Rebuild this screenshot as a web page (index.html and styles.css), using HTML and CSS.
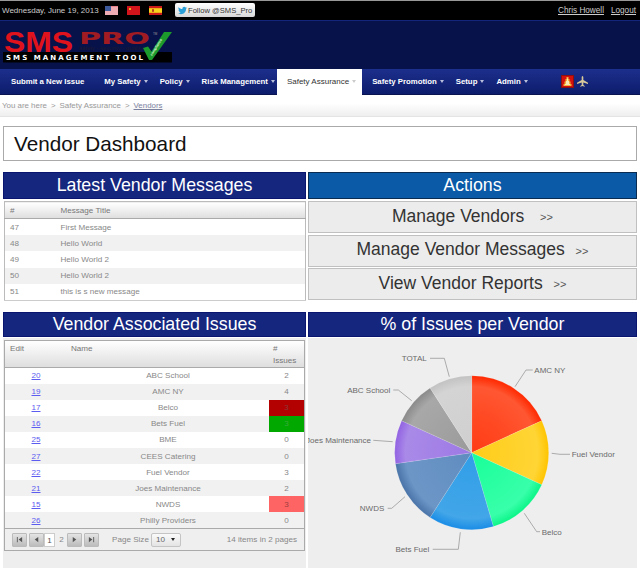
FILE: index.html
```html
<!DOCTYPE html>
<html lang="en">
<head>
  <meta charset="UTF-8">
  <title>Vendor Dashboard</title>
  <link rel="stylesheet" href="styles.css">
</head>
<body>
  <div class="topBar">
    <span class="topDate">Wednesday, June 19, 2013</span>
    <div class="flags">
      <svg class="flag" viewBox="0 0 13 9">
        <rect width="13" height="9" fill="#e8838c"/>
        <path d="M0 2h13M0 4h13M0 6h13M0 8h13" stroke="#f6d5d8" stroke-width="1"/>
        <rect width="6" height="5" fill="#3d5a9c"/>
      </svg>
      <svg class="flag" viewBox="0 0 13 9">
        <rect width="13" height="9" fill="#d3141a"/>
        <rect x="2" y="2" width="2" height="2" fill="#e8b020"/>
      </svg>
      <svg class="flag" viewBox="0 0 13 9">
        <rect width="13" height="9" fill="#cc1a1a"/>
        <rect y="2.2" width="13" height="4.6" fill="#f7d21c"/>
        <rect x="3" y="3.2" width="2" height="2.6" fill="#b8401a"/>
      </svg>
    </div>
    <div class="followBtn">
      <svg class="bird" viewBox="0 0 24 24"><path fill="#2a9fd8" d="M23.953 4.57a10 10 0 01-2.825.775 4.958 4.958 0 002.163-2.723c-.951.555-2.005.959-3.127 1.184a4.92 4.92 0 00-8.384 4.482C7.69 8.095 4.067 6.13 1.64 3.162a4.822 4.822 0 00-.666 2.475c0 1.71.87 3.213 2.188 4.096a4.904 4.904 0 01-2.228-.616v.06a4.923 4.923 0 003.946 4.827 4.996 4.996 0 01-2.212.085 4.936 4.936 0 004.604 3.417 9.867 9.867 0 01-6.102 2.105c-.39 0-.779-.023-1.17-.067a13.995 13.995 0 007.557 2.209c9.053 0 13.998-7.496 13.998-13.985 0-.21 0-.42-.015-.63A9.935 9.935 0 0024 4.59z"/></svg>
      <span>Follow @SMS_Pro</span>
    </div>
    <div class="userLinks">
      <a href="#">Chris Howell</a>
      <a href="#">Logout</a>
    </div>
  </div>

  <div class="logoBar">
    <svg class="logo" viewBox="0 20 180 49">
      <text class="logoSms" x="4" y="51.500" textLength="69" lengthAdjust="spacingAndGlyphs">SMS</text>
      <text class="logoPro" x="79" y="43.500" textLength="71" lengthAdjust="spacingAndGlyphs">PRO</text>
      <text class="logoTm" x="153" y="35">TM</text>
      <text class="logoTag" x="79" y="50" textLength="64" lengthAdjust="spacingAndGlyphs">safety - security - quality</text>
      <rect x="3" y="52" width="169" height="10.500" fill="#000"/>
      <text class="logoBarText" x="6" y="60" textLength="137" lengthAdjust="spacing">SMS MANAGEMENT TOOL</text>
      <path d="M143 48l5-1.500 3.500 5L164 32h8L152 60h-3z" fill="#1c9a2c"/>
      <text class="logoCheck" transform="translate(152 56) rotate(-58)">compliance</text>
    </svg>
  </div>

  <nav class="mainNav">
    <a class="navItem navFirst" href="#">Submit a New Issue</a>
    <a class="navItem" href="#">My Safety<i class="caret"></i></a>
    <a class="navItem" href="#">Policy<i class="caret"></i></a>
    <a class="navItem" href="#">Risk Management<i class="caret"></i></a>
    <a class="navItem navActive" href="#">Safety Assurance<i class="caret"></i></a>
    <a class="navItem" href="#">Safety Promotion<i class="caret"></i></a>
    <a class="navItem" href="#">Setup<i class="caret"></i></a>
    <a class="navItem" href="#">Admin<i class="caret"></i></a>
    <div class="navIcons">
      <svg class="bell" viewBox="0 0 13 13">
        <rect width="13" height="13" fill="#8c1010"/>
        <rect x="1" y="1" width="11" height="11" fill="#d4100c"/>
        <path d="M5.500 2h2v2h1v2.500h1V9h1v2h-8V9h1V6.500h1V4h1z" fill="#f5b23a"/>
        <path d="M6 3.500h1v2.500h1v3h1v1H4V9h1V6h1z" fill="#fbe7b4"/>
      </svg>
      <svg class="plane" viewBox="0 0 12 12">
        <path d="M6 0c.6 0 .9.8.9 1.600V4.400L12 7.400V8.600L6.900 7V9.700L8.400 10.800V11.700L6 11 3.600 11.700V10.800L5.100 9.700V7L0 8.600V7.400L5.100 4.400V1.600C5.100.8 5.400 0 6 0z" fill="#d8c99a"/>
      </svg>
    </div>
  </nav>

  <div class="breadcrumb">
    <span>You are here</span><span class="crumbSep">&gt;</span><span>Safety Assurance</span><span class="crumbSep">&gt;</span><a href="#">Vendors</a>
  </div>

  <h1 class="pageTitle">Vendor Dashboard</h1>

  <div class="dashboard">
    <section class="panel">
      <h2 class="panelHead">Latest Vendor Messages</h2>
      <table class="grid msgGrid">
        <thead>
          <tr><th class="msgId">#</th><th>Message Title</th></tr>
        </thead>
        <tbody>
          <tr><td class="msgId">47</td><td>First Message</td></tr>
          <tr><td class="msgId">48</td><td>Hello World</td></tr>
          <tr><td class="msgId">49</td><td>Hello World 2</td></tr>
          <tr><td class="msgId">50</td><td>Hello World 2</td></tr>
          <tr><td class="msgId">51</td><td>this is s new message</td></tr>
        </tbody>
      </table>
    </section>

    <section class="panel">
      <h2 class="panelHead actionsHead">Actions</h2>
      <div class="actionList">
        <a class="actionBtn" href="#">Manage Vendors&nbsp; <small>&gt;&gt;</small></a>
        <a class="actionBtn" href="#">Manage Vendor Messages <small>&gt;&gt;</small></a>
        <a class="actionBtn" href="#">View Vendor Reports <small>&gt;&gt;</small></a>
      </div>
    </section>

    <section class="panel panelGray">
      <h2 class="panelHead">Vendor Associated Issues</h2>
      <div class="issuesWrap">
        <table class="grid issuesGrid">
          <thead>
            <tr><th class="colEdit">Edit</th><th class="colName">Name</th><th class="colCount">#<br>Issues</th></tr>
          </thead>
          <tbody>
            <tr><td class="colEdit"><a href="#">20</a></td><td class="colName">ABC School</td><td class="colCount">2</td></tr>
            <tr><td class="colEdit"><a href="#">19</a></td><td class="colName">AMC NY</td><td class="colCount">4</td></tr>
            <tr><td class="colEdit"><a href="#">17</a></td><td class="colName">Belco</td><td class="colCount hitRed">3</td></tr>
            <tr><td class="colEdit"><a href="#">16</a></td><td class="colName">Bets Fuel</td><td class="colCount hitGreen">3</td></tr>
            <tr><td class="colEdit"><a href="#">25</a></td><td class="colName">BME</td><td class="colCount">0</td></tr>
            <tr><td class="colEdit"><a href="#">27</a></td><td class="colName">CEES Catering</td><td class="colCount">0</td></tr>
            <tr><td class="colEdit"><a href="#">22</a></td><td class="colName">Fuel Vendor</td><td class="colCount">3</td></tr>
            <tr><td class="colEdit"><a href="#">21</a></td><td class="colName">Joes Maintenance</td><td class="colCount">2</td></tr>
            <tr><td class="colEdit"><a href="#">15</a></td><td class="colName">NWDS</td><td class="colCount hitPink">3</td></tr>
            <tr><td class="colEdit"><a href="#">26</a></td><td class="colName">Philly Providers</td><td class="colCount">0</td></tr>
          </tbody>
        </table>
        <div class="pager">
          <span class="pageBtn"><svg viewBox="0 0 8 8"><path d="M1 1h1v6H1zM7 1v6L3 4z"/></svg></span>
          <span class="pageBtn pagePrev"><svg viewBox="0 0 8 8"><path d="M6 1v6L2 4z"/></svg></span>
          <span class="pageNum pageCurrent">1</span>
          <span class="pageNum">2</span>
          <span class="pageBtn"><svg viewBox="0 0 8 8"><path d="M2 1v6l4-3z"/></svg></span>
          <span class="pageBtn pageLast"><svg viewBox="0 0 8 8"><path d="M1 1v6l4-3zM6 1h1v6H6z"/></svg></span>
          <span class="pageSize">Page Size</span>
          <span class="sizeSelect">10<i class="selectCaret"></i></span>
          <span class="pageInfo">14 items in 2 pages</span>
        </div>
      </div>
    </section>

    <section class="panel panelGray">
      <h2 class="panelHead">% of Issues per Vendor</h2>
      <svg class="pie" viewBox="0 0 329 230">
        <defs>
          <radialGradient id="gRed" gradientUnits="userSpaceOnUse" cx="163.700" cy="114.700" r="77">
            <stop offset="0" stop-color="#ff3c14"/><stop offset=".5" stop-color="#ff4a24"/><stop offset=".86" stop-color="#ff5732"/><stop offset="1" stop-color="#ff2800"/>
          </radialGradient>
          <radialGradient id="gYellow" gradientUnits="userSpaceOnUse" cx="163.700" cy="114.700" r="77">
            <stop offset="0" stop-color="#ffcc18"/><stop offset=".86" stop-color="#ffd535"/><stop offset="1" stop-color="#ffc400"/>
          </radialGradient>
          <radialGradient id="gGreen" gradientUnits="userSpaceOnUse" cx="163.700" cy="114.700" r="77">
            <stop offset="0" stop-color="#18ff98"/><stop offset=".86" stop-color="#38ffaa"/><stop offset="1" stop-color="#0cf588"/>
          </radialGradient>
          <radialGradient id="gBlue" gradientUnits="userSpaceOnUse" cx="163.700" cy="114.700" r="77">
            <stop offset="0" stop-color="#309ee8"/><stop offset=".86" stop-color="#42a6e8"/><stop offset="1" stop-color="#1a8ce6"/>
          </radialGradient>
          <radialGradient id="gSteel" gradientUnits="userSpaceOnUse" cx="163.700" cy="114.700" r="77">
            <stop offset="0" stop-color="#5f8cc0"/><stop offset=".86" stop-color="#6c96c6"/><stop offset="1" stop-color="#4a74a8"/>
          </radialGradient>
          <radialGradient id="gPurple" gradientUnits="userSpaceOnUse" cx="163.700" cy="114.700" r="77">
            <stop offset="0" stop-color="#9d78e4"/><stop offset=".86" stop-color="#a98ae8"/><stop offset="1" stop-color="#9262e2"/>
          </radialGradient>
          <radialGradient id="gGray" gradientUnits="userSpaceOnUse" cx="163.700" cy="114.700" r="77">
            <stop offset="0" stop-color="#9a9a9a"/><stop offset=".86" stop-color="#a8a8a8"/><stop offset="1" stop-color="#8a8a8a"/>
          </radialGradient>
          <radialGradient id="gLight" gradientUnits="userSpaceOnUse" cx="163.700" cy="114.700" r="77">
            <stop offset="0" stop-color="#cfcfcf"/><stop offset=".86" stop-color="#d4d4d4"/><stop offset="1" stop-color="#c2c2c2"/>
          </radialGradient>
        </defs>
        <g class="slices">
          <path d="M163.700 114.700V37.700A77 77 0 0 1 233.740 82.710Z" fill="url(#gRed)"/>
          <path d="M163.700 114.700L233.740 82.710A77 77 0 0 1 233.740 146.690Z" fill="url(#gYellow)"/>
          <path d="M163.700 114.700L233.740 146.690A77 77 0 0 1 185.390 188.580Z" fill="url(#gGreen)"/>
          <path d="M163.700 114.700L185.390 188.580A77 77 0 0 1 122.070 179.480Z" fill="url(#gBlue)"/>
          <path d="M163.700 114.700L122.070 179.480A77 77 0 0 1 87.490 125.660Z" fill="url(#gSteel)"/>
          <path d="M163.700 114.700L87.490 125.660A77 77 0 0 1 93.660 82.710Z" fill="url(#gPurple)"/>
          <path d="M163.700 114.700L93.660 82.710A77 77 0 0 1 122.070 49.920Z" fill="url(#gGray)"/>
          <path d="M163.700 114.700L122.070 49.920A77 77 0 0 1 163.700 37.700Z" fill="url(#gLight)"/>
        </g>
        <g class="leaders">
          <path d="M207 48.700L218 32H224.700"/>
          <path d="M243.700 115.300L252 116.300H262"/>
          <path d="M216.300 175.300L228.700 193.700H232"/>
          <path d="M152.300 194.300L150.300 211.300H124.700"/>
          <path d="M97 158.700L83.700 170.300H79.700"/>
          <path d="M84.700 103.700L65.300 102.300"/>
          <path d="M103.700 62.700L90.300 52H85.300"/>
          <path d="M141.300 38.700L136.300 20.300H122"/>
        </g>
        <g class="pieLabels">
          <text x="226.300" y="35">AMC NY</text>
          <text x="263.700" y="119">Fuel Vendor</text>
          <text x="233.700" y="197">Belco</text>
          <text class="labelEnd" x="121.300" y="214">Bets Fuel</text>
          <text class="labelEnd" x="76.300" y="173">NWDS</text>
          <text class="labelEnd" x="63" y="105">Joes Maintenance</text>
          <text class="labelEnd" x="82.300" y="54.500">ABC School</text>
          <text class="labelEnd" x="118.700" y="23">TOTAL</text>
        </g>
      </svg>
    </section>
  </div>
</body>
</html>
```

FILE: styles.css
```css
html, body {
  margin: 0;
  padding: 0;
  height: 572px;
  overflow: hidden;
}
body {
  font-family: "Liberation Sans", Arial, sans-serif;
  background-color: #fff;
  color: #777;
}

/* top strip */
.topBar {
  display: flex;
  align-items: center;
  box-sizing: border-box;
  height: 20px;
  border-top: 1px solid #999;
  background-color: #000;
  color: #ccc;
  font-size: 8px;
  padding: 0 4px 1px 2px;
}
.topDate { width: 103px; white-space: nowrap; }
.flags {
  display: flex;
  gap: 9px;
  width: 70px;
}
.flag { width: 13px; height: 9px; }
.followBtn {
  display: flex;
  align-items: center;
  gap: 1px;
  box-sizing: border-box;
  width: 80px;
  height: 14px;
  background: linear-gradient(#fff, #d8d8d8);
  border-radius: 2px;
  padding-left: 3px;
  color: #333;
  font-size: 7.600px;
  white-space: nowrap;
}
.bird { width: 9px; height: 9px; flex: none; }
.userLinks {
  display: flex;
  gap: 7px;
  margin-left: auto;
}
.userLinks a { color: #ccc; font-size: 8.200px; }

/* logo */
.logoBar {
  height: 49px;
  box-sizing: border-box;
  background-color: #08124a;
  border-top: 1px solid #14247a;
}
.logo {
  display: block;
  width: 180px;
  height: 49px;
  margin-top: -1px;
}
.logoSms {
  font-family: "Liberation Sans", Arial, sans-serif;
  font-size: 29px;
  font-weight: bold;
  fill: #e0121c;
}
.logoPro {
  font-family: "DejaVu Sans", sans-serif;
  font-size: 15px;
  font-weight: bold;
  fill: #a01c22;
}
.logoTm { font-size: 3px; fill: #999; }
.logoTag { font-size: 5px; fill: #1a1a30; }
.logoBarText {
  font-family: "DejaVu Sans", sans-serif;
  font-size: 7px;
  font-weight: bold;
  fill: #fff;
}
.logoCheck { font-size: 3.500px; font-weight: bold; fill: #e8ffe8; }

/* main nav */
.mainNav {
  display: flex;
  align-items: center;
  height: 26px;
  background: linear-gradient(#1c2f8c, #0d1c6c);
  border-bottom: 1px solid #0a1450;
  box-sizing: border-box;
}
.navItem {
  display: flex;
  align-items: center;
  height: 26px;
  padding: 0 6px;
  color: #fff;
  font-size: 7.800px;
  font-weight: bold;
  text-decoration: none;
  white-space: nowrap;
}
.navFirst { padding-left: 11px; padding-right: 14px; }
.navActive {
  background-color: #fff;
  color: #333;
  font-weight: normal;
  padding: 0 6px 0 10px;
  margin: 0 4px 0 -4px;
  font-size: 8px;
}
.caret {
  display: inline-block;
  margin-left: 3px;
  border-left: 2.500px solid transparent;
  border-right: 2.500px solid transparent;
  border-top: 3px solid #b8c0dc;
}
.navActive .caret { border-top-color: #ccc; }
.navIcons {
  display: flex;
  align-items: center;
  gap: 3px;
  margin-left: 27px;
}
.bell { width: 13px; height: 13px; }
.plane { width: 11px; height: 11px; }

/* breadcrumb */
.breadcrumb {
  display: flex;
  align-items: center;
  height: 22px;
  padding: 0 2px;
  background: linear-gradient(#fff 40%, #eee);
  border-bottom: 1px solid #e4e4e4;
  box-sizing: border-box;
  font-size: 7.900px;
  color: #999;
}
.breadcrumb a { color: #7a82a0; }
.crumbSep { margin: 0 4px; }

.pageTitle {
  box-sizing: border-box;
  height: 35px;
  margin: 9px 3px 0;
  padding-left: 10px;
  border: 1px solid #aaa;
  color: #111;
  font-size: 20.700px;
  font-weight: normal;
  line-height: 33px;
}

/* dashboard panels */
.dashboard {
  display: grid;
  grid-template-columns: 303px 329px;
  grid-template-rows: 128px 256px;
  column-gap: 2px;
  row-gap: 12px;
  margin: 11px 0 0 3px;
}
.panel { display: flex; flex-direction: column; min-width: 0; }
.panelGray { background-color: #eee; }
.panelHead {
  flex: none;
  box-sizing: border-box;
  height: 27px;
  margin: 0 0 2px;
  background-color: #15267f;
  border: 1px solid #0a1570;
  color: #fff;
  font-size: 17.800px;
  font-weight: normal;
  line-height: 25px;
  text-align: center;
}
.panelGray .panelHead {
  height: 25px;
  margin-bottom: 1px;
  line-height: 23px;
  box-shadow: 0 1px 0 #fff;
}
.actionsHead {
  background-color: #0a5aa8;
  border-color: #0a2c50;
}

/* tables */
.grid {
  width: 100%;
  border-collapse: collapse;
  table-layout: fixed;
  font-size: 8.100px;
  color: #888;
  background-color: #fff;
}
.grid th {
  box-sizing: border-box;
  background: linear-gradient(#fff, #dedede);
  border-bottom: 1px solid #aaa;
  color: #777;
  font-weight: normal;
  text-align: left;
  vertical-align: top;
}
.grid td { height: 16.200px; padding: 0; }
.grid tbody tr:nth-child(even) td { background-color: #f1f1f1; }

.msgGrid {
  box-sizing: border-box;
  width: 302px;
  margin-left: 1px;
  border: 1px solid #bbb;
  border-bottom-color: #ccc;
}
.msgGrid th { height: 17px; padding: 4px 0 0 0; }
.msgGrid .msgId { box-sizing: border-box; width: 56px; padding-left: 5px; }

.issuesWrap {
  box-sizing: border-box;
  width: 301px;
  height: 211px;
  margin: 2px 0 0 1px;
  border: 1px solid #aaa;
  background-color: #fff;
}
.issuesGrid { width: 299px; }
.issuesGrid td { height: 16.100px; }
.issuesGrid th { height: 25px; padding: 2px 0 0 0; line-height: 12px; }
.issuesGrid .colEdit { box-sizing: border-box; width: 62px; text-align: center; }
.issuesGrid th.colEdit { text-align: left; padding-left: 5px; }
.issuesGrid .colName { box-sizing: border-box; width: 202px; text-align: center; }
.issuesGrid th.colName { text-align: left; padding-left: 4px; }
.issuesGrid .colCount { box-sizing: border-box; width: 35px; text-align: center; }
.issuesGrid th.colCount { text-align: left; padding-left: 4px; }
.colEdit a { color: #5c5cf0; }
.grid tbody tr td.hitRed { background-color: #b30000; color: #8a3a3a; }
.grid tbody tr td.hitGreen { background-color: #00a800; color: #3aaa3a; }
.grid tbody tr td.hitPink { background-color: #ff6464; color: #a04040; }

/* pager */
.pager {
  display: flex;
  align-items: center;
  box-sizing: border-box;
  height: 22px;
  padding: 0 7px;
  border-top: 1px solid #aaa;
  background-color: #efefef;
  font-size: 8.100px;
  color: #888;
}
.pageBtn {
  display: flex;
  align-items: center;
  justify-content: center;
  box-sizing: border-box;
  width: 15px;
  height: 14px;
  margin-right: 2px;
  background: linear-gradient(#e4e4e4, #bcbcbc);
  border: 1px solid #bbb;
  border-radius: 1px;
}
.pageBtn svg { width: 7px; height: 7px; fill: #555; }
.pagePrev { margin-right: 0; }
.pageLast { margin-right: 13px; }
.pageNum {
  box-sizing: border-box;
  width: 11px;
  height: 14px;
  line-height: 13px;
  text-align: center;
}
.pageCurrent {
  background-color: #fff;
  border: 1px solid #ccc;
  color: #555;
  margin-right: 1px;
}
.pageSize { width: 39px; white-space: nowrap; }
.sizeSelect {
  display: flex;
  align-items: center;
  justify-content: space-between;
  box-sizing: border-box;
  width: 30px;
  height: 14px;
  padding: 0 5px 0 4px;
  background: linear-gradient(#fafafa, #e4e4e4);
  border: 1px solid #c4c4c4;
  border-radius: 2px;
  color: #666;
}
.selectCaret {
  border-left: 2.500px solid transparent;
  border-right: 2.500px solid transparent;
  border-top: 3px solid #222;
}
.pageInfo { margin-left: auto; white-space: nowrap; }

/* actions */
.actionList {
  display: flex;
  flex-direction: column;
  gap: 1.500px;
}
.actionBtn {
  display: flex;
  align-items: center;
  justify-content: center;
  box-sizing: border-box;
  height: 32px;
  padding-bottom: 2px;
  background-color: #ececec;
  border: 1px solid #c0c0c0;
  color: #333;
  font-size: 17.500px;
  text-decoration: none;
  white-space: pre;
}
.actionBtn small {
  font-size: 11px;
  color: #555;
  margin: 2px 0 0 6px;
}

/* pie */
.pie {
  display: block;
  width: 329px;
  height: 230px;
  flex: none;
  overflow: hidden;
}
.slices path { stroke: rgba(255, 255, 255, 0.25); stroke-width: 0.500; }
.leaders path { fill: none; stroke: #999; stroke-width: 0.800; }
.pieLabels text { font-size: 8px; fill: #6a6a6a; }
.pieLabels .labelEnd { text-anchor: end; }
```
